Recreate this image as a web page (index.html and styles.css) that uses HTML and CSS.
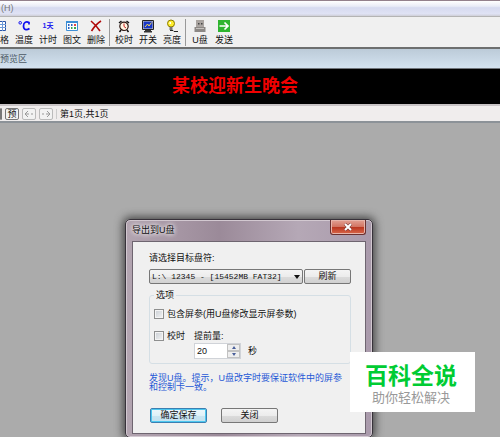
FILE: index.html
```html
<!DOCTYPE html>
<html lang="zh">
<head>
    <meta charset="UTF-8">
    <title>导出到U盘</title>
    <link rel="stylesheet" href="styles.css">
</head>
<body>
    <nav class="menu"><a href="#">(H)</a></nav>

    <div class="toolbar">
        <button type="button" class="tool half">
            <svg viewBox="7 0 7 14"><path fill="#fff" stroke="#2a55a8" d="M1.500 2.500h11v9h-11z"/><path fill="none" stroke="#6f9bd8" d="M1 5.500h12M1 8.500h12M5.500 2v10M9.500 2v10"/></svg>
            <span>格</span>
        </button>
        <button type="button" class="tool">
            <svg viewBox="0 0 14 14"><circle cx="3.200" cy="3.800" r="1.300" fill="none" stroke="#1010f0"/><path fill="none" stroke="#1010f0" stroke-width="1.700" d="M12 5.500V3.500C9.500 2.300 6.500 3 6.500 7s3 4.600 6 2.500"/></svg>
            <span>温度</span>
        </button>
        <button type="button" class="tool">
            <span class="days">1天</span>
            <span>计时</span>
        </button>
        <button type="button" class="tool">
            <svg viewBox="0 0 14 14"><path fill="#fff" stroke="#3d8fd6" d="M1.500 2.500h11v9h-11z"/><path fill="#3d8fd6" d="M1 2h12v2H1z"/><g fill="#2a60c0"><path d="M3 5h1.500v2H3zM6 5h1.500v2H6zM3 8h1.500v2H3z"/></g><path fill="#e04848" d="M9 5h2v2H9z"/><path fill="#3aa850" d="M6 8h1.500v2H6zM9 8h2v2H9z"/></svg>
            <span>图文</span>
        </button>
        <button type="button" class="tool">
            <svg viewBox="0 0 14 14"><path fill="none" stroke="#b00808" stroke-width="1.600" d="M2 2c3 2.500 6.500 6 9 10M12 2C8 4.500 5 8 2.500 12"/></svg>
            <span>删除</span>
        </button>
        <i class="sep"></i>
        <button type="button" class="tool">
            <svg viewBox="0 0 14 14"><path fill="none" stroke="#111" stroke-width="1.500" d="M2 4l2.500-2M9.500 2L12 4M4 11l-1.500 2M10 11l1.500 2"/><circle cx="7" cy="7.300" r="4.200" fill="#fff4e0" stroke="#2a1510" stroke-width="1.200"/><path fill="none" stroke="#c22" d="M7 4.500v3l2 1.500"/></svg>
            <span>校时</span>
        </button>
        <button type="button" class="tool">
            <svg viewBox="0 0 14 14"><path fill="#d8d4c8" stroke="#222" d="M1.500 1.500h11v9h-11z"/><path fill="#1736c8" d="M2.500 2.500h9v7h-9z"/><path fill="none" stroke="#f5d850" d="M4 8l2.500-3 1.500 2L10.500 3.500"/><path fill="#333" d="M4 11h6v1h1v1.500H3V12h1z"/></svg>
            <span>开关</span>
        </button>
        <button type="button" class="tool">
            <svg viewBox="0 0 14 14"><circle cx="6" cy="4.500" r="3.500" fill="#ffee30" stroke="#8a7a00"/><path fill="#fff" d="M4.500 3h1.500v2H4.500z"/><path fill="#777" d="M4.500 8h3v3h-3z"/><path fill="none" stroke="#222" d="M5 11.500h3l1 1h4"/></svg>
            <span>亮度</span>
        </button>
        <i class="sep"></i>
        <button type="button" class="tool">
            <svg viewBox="0 0 14 14"><path fill="#aaa4a0" d="M3 1h8v7H3z"/><path fill="#444" d="M5 4h1.500v1.500H5zM8 4h1.500v1.500H8z"/><path fill="#8c8885" d="M1.500 8h11v5h-11z"/><path fill="#c6c2be" d="M3 9h8v1H3z"/></svg>
            <span>U盘</span>
        </button>
        <button type="button" class="tool">
            <svg viewBox="0 0 14 14"><path fill="#2fb52f" d="M1 1h12v12H1z"/><path fill="none" stroke="#fff" stroke-width="1.700" d="M2.500 7h8M7.500 3.500L11 7l-3.500 3.500"/></svg>
            <span>发送</span>
        </button>
    </div>

    <div class="caption">预览区</div>
    <div class="screen">某校迎新生晚会</div>

    <div class="pager">
        <button type="button" class="edge" aria-label="上一步"></button>
        <button type="button">预</button>
        <button type="button" disabled aria-label="上一页"><svg viewBox="0 0 10 8"><path d="M4 1L1 4l3 3M2 4h3M7 4h2"/></svg></button>
        <button type="button" disabled aria-label="下一页"><svg viewBox="0 0 10 8"><path d="M6 1l3 3-3 3M1 4h2M5 4h3"/></svg></button>
        <span class="pages">第1页,共1页</span>
    </div>

    <form class="dialog">
        <div class="title">
            <span>导出到U盘</span>
            <button type="button" class="close" aria-label="关闭窗口">
                <svg viewBox="0 0 10 8"><path d="M2 1l6 6M8 1L2 7" stroke="#6b3030" stroke-width="3"/><path d="M2 1l6 6M8 1L2 7" stroke="#fff" stroke-width="2"/></svg>
            </button>
        </div>
        <div class="content">
            <label for="drive">请选择目标盘符:</label>
            <div class="drive-row">
                <span class="select">
                    <select id="drive"><option>L:\ 12345 - [15452MB FAT32]</option></select>
                </span>
                <button type="button" class="btn refresh">刷新</button>
            </div>
            <fieldset>
                <legend>选项</legend>
                <label class="check"><input type="checkbox">包含屏参(用U盘修改显示屏参数)</label>
                <div class="time-row">
                    <label class="check"><input type="checkbox">校时</label>
                    <label for="ahead">提前量:</label>
                </div>
                <div class="ahead-row">
                    <span class="spinner">
                        <input type="text" id="ahead" value="20">
                        <span class="arrows">
                            <button type="button" aria-label="增加"></button>
                            <button type="button" class="down" aria-label="减少"></button>
                        </span>
                    </span>
                    <span>秒</span>
                </div>
            </fieldset>
            <p class="note">发现U盘。提示，U盘改字时要保证软件中的屏参和控制卡一致。</p>
            <div class="actions">
                <button type="submit" class="btn primary">确定保存</button>
                <button type="button" class="btn">关闭</button>
            </div>
        </div>
    </form>

    <div class="brand">
        <strong>百科全说</strong>
        <span>助你轻松解决</span>
    </div>
</body>
</html>
```

FILE: styles.css
```css
* {
    box-sizing: border-box;
}
body {
    position: relative;
    margin: 0;
    min-height: 100vh;
    overflow: hidden;
    background-color: #ababab;
    font-family: "Liberation Sans", "Noto Sans CJK SC", sans-serif;
    font-size: 9px;
    line-height: 10px;
    color: #111;
}
button, input, select {
    margin: 0;
    padding: 0;
    font: inherit;
    color: inherit;
}
.menu {
    height: 17px;
    padding: 2px 1px;
    border-top: 1px solid #93808c;
    border-bottom: 1px solid #b4b4b4;
    background: linear-gradient(#fff, #e9ebf7 35%, #d6daf0 45%, #dfe2f4 85%, #cfcfd8);
}
.menu a {
    color: #777;
    text-decoration: none;
}
.toolbar {
    display: flex;
    height: 32px;
    padding-top: 2px;
    border-bottom: 2px solid #6d6f6f;
    background-color: #f0f0f0;
}
.tool {
    display: flex;
    flex-direction: column;
    align-items: center;
    width: 24px;
    height: 28px;
    border: none;
    background: none;
    white-space: nowrap;
}
.tool svg {
    width: 14px;
    height: 14px;
}
.tool span {
    height: 14px;
    line-height: 14px;
}
.tool .days {
    font-size: 7px;
    font-weight: bold;
    color: #2222f0;
}
.half {
    align-items: flex-start;
    width: 12px;
}
.half svg {
    width: 7px;
}
.sep {
    width: 1px;
    height: 27px;
    margin: 0 2px 0 1px;
    background-color: #999;
}
.caption {
    height: 20px;
    line-height: 20px;
    border-bottom: 1px solid #70757c;
    background: linear-gradient(#bccbd8, #d3e2f0);
    color: #4c5964;
}
.screen {
    height: 35px;
    padding-left: 172px;
    background-color: #000;
    color: #f00000;
    font-family: "Liberation Serif", "Noto Sans CJK SC", serif;
    font-size: 18px;
    font-weight: bold;
    line-height: 34px;
}
.pager {
    display: flex;
    align-items: center;
    gap: 3px;
    height: 19px;
    border-top: 2px solid #c9c4c6;
    border-bottom: 2px solid #8c9298;
    background-color: #f0eded;
}
.pager button {
    width: 14px;
    height: 12px;
    border: 1px solid #777;
    border-radius: 2px;
    background-color: #f2f2f2;
    line-height: 10px;
}
.pager .edge {
    width: 1px;
    background-color: #777;
}
.pager button:disabled {
    border-color: #bbb;
}
.pager svg {
    display: block;
    width: 10px;
    height: 8px;
    margin: 0 auto;
    fill: none;
    stroke: #999;
}
.pages {
    padding-left: 3px;
    border-left: 1px solid #ccc;
}
.dialog {
    position: absolute;
    top: 219px;
    left: 125px;
    width: 248px;
    padding: 0 6px 3px;
    border: 1px solid #37323a;
    border-radius: 5px;
    background: linear-gradient(90deg, #b3a5b1, #9b8a99 38%, #b5a8b6 70%, #a99aab);
    box-shadow: inset 0 0 0 1px #d2c8d0, 0 0 9px 2px #444;
}
.title {
    display: flex;
    justify-content: space-between;
    height: 21px;
    line-height: 21px;
}
.title span {
    text-shadow: 0 0 5px #fff, 0 0 5px #fff;
}
.close {
    width: 36px;
    height: 15px;
    border: 1px solid #6a3030;
    border-top: none;
    border-radius: 0 0 3px 3px;
    background: linear-gradient(#e3a194, #d27462 48%, #b8341e 50%, #d9674a);
    box-shadow: inset 0 0 0 1px #e8b5aa;
}
.close svg {
    display: block;
    width: 10px;
    height: 8px;
    margin: 0 auto;
    fill: none;
}
.content {
    padding: 11px 14px 10px 16px;
    border: 1px solid #6e6570;
    background-color: #f0f0f0;
}
.content > label {
    display: block;
}
.drive-row {
    display: flex;
    gap: 1px;
    margin-top: 6px;
}
.select {
    position: relative;
    flex: 1;
}
.select::after {
    content: "";
    position: absolute;
    top: 6px;
    right: 3px;
    border: 3px solid transparent;
    border-top: 4px solid #111;
    border-bottom: none;
    pointer-events: none;
}
.select select {
    appearance: none;
    display: block;
    width: 100%;
    height: 15px;
    padding: 0 2px;
    border: 1px solid #777;
    border-radius: 2px;
    background: linear-gradient(#f4f4f4, #ececec 50%, #dcdcdc 50%, #d2d2d2);
    font-family: "Liberation Mono", monospace;
    font-size: 8px;
}
.btn {
    width: 57px;
    height: 15px;
    border: 1px solid #777;
    border-radius: 2px;
    background: linear-gradient(#f4f4f4, #ececec 50%, #dcdcdc 50%, #d0d0d0);
    line-height: 13px;
}
.refresh {
    width: 47px;
}
.primary {
    border-color: #3c7fb1;
    box-shadow: inset 0 0 0 1px #4cc8f0;
    background: linear-gradient(#eef7fb, #dff1f8 50%, #c9e5f2 50%, #c4e2ef);
}
fieldset {
    min-width: 0;
    margin: 6px 0 0;
    padding: 0 4px 4px;
    border: 1px solid #d5dfe5;
    border-radius: 3px;
}
legend {
    padding: 0 2px;
}
.check {
    display: flex;
    align-items: center;
    gap: 3px;
    white-space: nowrap;
}
.check input {
    appearance: none;
    width: 10px;
    height: 10px;
    border: 1px solid #8e8f8f;
    background: linear-gradient(135deg, #c9ced4, #f4f4f4);
    box-shadow: inset 0 0 0 1px #f4f4f4;
}
fieldset > .check {
    margin-top: 9px;
}
.time-row {
    display: flex;
    gap: 9px;
    margin-top: 12px;
}
.ahead-row {
    display: flex;
    align-items: center;
    gap: 7px;
    margin: 2px 0 0 40px;
}
.spinner {
    display: flex;
    width: 47px;
    height: 16px;
    border: 1px solid #d0d3d8;
    background-color: #fff;
}
.spinner input {
    flex: 1;
    min-width: 0;
    padding-left: 2px;
    border: none;
    background: none;
}
.arrows {
    display: flex;
    flex-direction: column;
    width: 13px;
}
.arrows button {
    display: flex;
    align-items: center;
    justify-content: center;
    flex: 1;
    border: 1px solid #c2c2c2;
    background-color: #eee;
}
.arrows button::before {
    content: "";
    border: 2px solid transparent;
    border-top: none;
    border-bottom: 3px solid #4a5f9a;
}
.arrows .down::before {
    border-top: 3px solid #4a5f9a;
    border-bottom: none;
}
.note {
    margin: 10px 0 0;
    padding-right: 7px;
    line-height: 9px;
    color: #1f58d6;
}
.actions {
    display: flex;
    gap: 14px;
    margin: 16px 0 0 1px;
}
.brand {
    position: absolute;
    top: 352px;
    left: 350px;
    display: flex;
    flex-direction: column;
    align-items: center;
    width: 125px;
    padding: 10px 3px 6px 0;
    background-color: #fff;
    color: #999;
    font-size: 13px;
    line-height: 16px;
}
.brand strong {
    color: #00cc33;
    font-size: 23px;
    font-weight: bold;
    line-height: 28px;
}
```
